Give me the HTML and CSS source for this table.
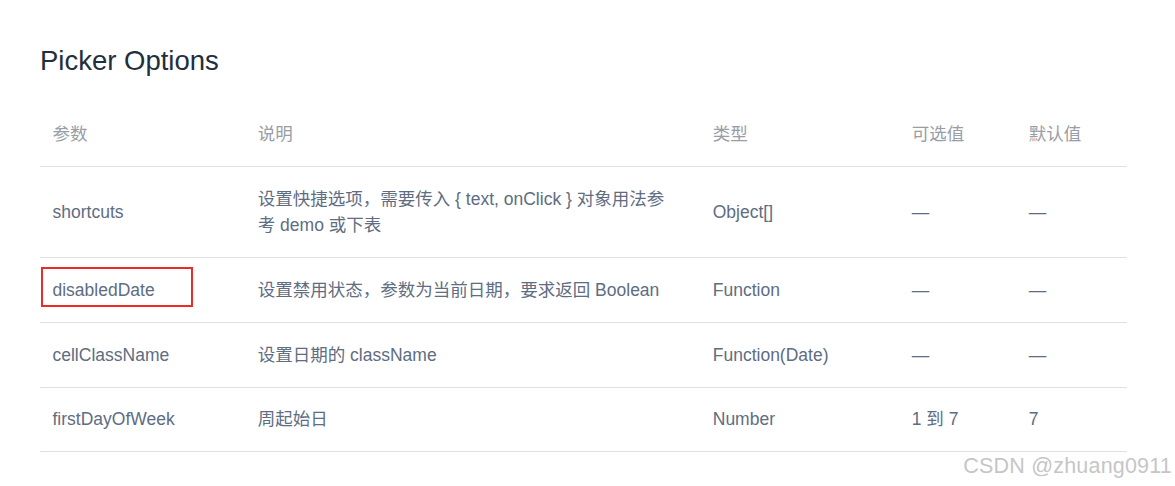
FILE: index.html
```html
<!DOCTYPE html>
<html lang="zh">
<head>
<meta charset="utf-8">
<title>Picker Options</title>
<link rel="stylesheet" href="styles.css">
</head>
<body>
<div class="page">
  <h3 class="title">Picker Options</h3>
  <table class="opts">
    <colgroup>
      <col class="c1"><col class="c2"><col class="c3"><col class="c4"><col class="c5">
    </colgroup>
    <thead>
      <tr><th>参数</th><th>说明</th><th>类型</th><th>可选值</th><th>默认值</th></tr>
    </thead>
    <tbody>
      <tr><td>shortcuts</td><td>设置快捷选项，需要传入 { text, onClick } 对象用法参考 demo 或下表</td><td>Object[]</td><td>—</td><td>—</td></tr>
      <tr><td class="marked">disabledDate<span class="mark"></span></td><td>设置禁用状态，参数为当前日期，要求返回 Boolean</td><td>Function</td><td>—</td><td>—</td></tr>
      <tr><td>cellClassName</td><td>设置日期的 className</td><td>Function(Date)</td><td>—</td><td>—</td></tr>
      <tr><td>firstDayOfWeek</td><td>周起始日</td><td>Number</td><td>1 到 7</td><td>7</td></tr>
    </tbody>
  </table>
  <div class="watermark">CSDN @zhuang0911</div>
</div>
</body>
</html>
```

FILE: styles.css
```css
html, body {
  margin: 0;
  padding: 0;
  background: #fff;
}
body {
  font-family: "Liberation Sans", Arial, "Noto Sans CJK SC", sans-serif;
}
.page {
  position: relative;
  width: 1175px;
  height: 486px;
  box-sizing: border-box;
  padding: 40px 48px 0 40px;
  overflow: hidden;
}
.title {
  margin: 0 0 21px;
  font-size: 27.5px;
  line-height: 41.25px;
  font-weight: normal;
  color: #1f2f3d;
}
.opts {
  width: 1087px;
  border-collapse: collapse;
  table-layout: fixed;
  font-size: 17.5px;
  line-height: 26.25px;
}
.c1 { width: 199px; }
.c2 { width: 455px; }
.c3 { width: 199px; }
.c4 { width: 117px; }
.c5 { width: 117px; }
.opts th,
.opts td {
  padding: 18.75px;
  text-align: left;
  vertical-align: middle;
  border-bottom: 1px solid #dfe1e8;
}
.opts th:first-child,
.opts td:first-child {
  padding-left: 12.5px;
}
.opts th {
  font-weight: normal;
  color: #999da5;
}
.opts td {
  color: #5e6d82;
}
.marked {
  position: relative;
}
.mark {
  position: absolute;
  left: 1px;
  top: 9px;
  width: 152px;
  height: 40px;
  box-sizing: border-box;
  border: 2.5px solid #ee2a24;
}
.watermark {
  position: absolute;
  right: 3px;
  bottom: 9px;
  font-size: 21.5px;
  line-height: 1;
  color: #c6c6c6;
  letter-spacing: 0.2px;
}
```
